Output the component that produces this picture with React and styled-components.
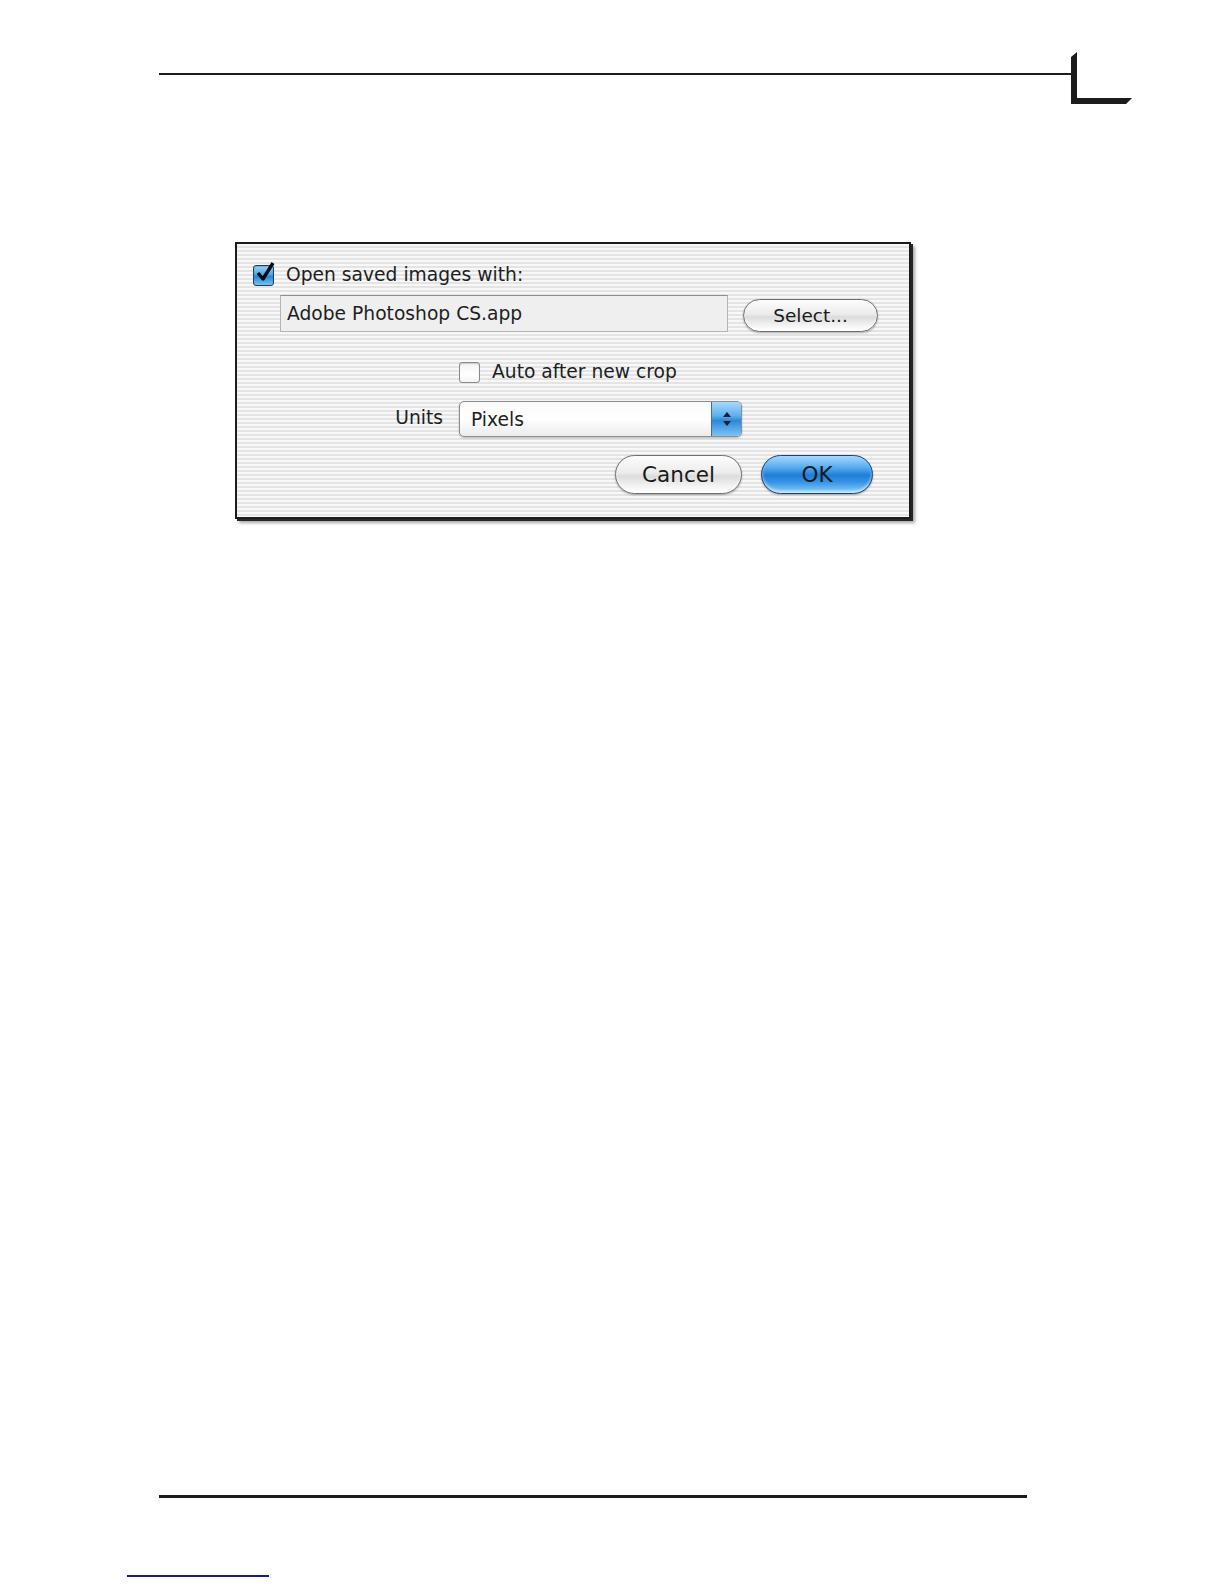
import styled, { createGlobalStyle } from 'styled-components';

const GlobalStyle = createGlobalStyle`
  html, body {
    margin: 0;
    padding: 0;
    background: #ffffff;
    overflow: hidden;
  }
  body {
    font-family: "DejaVu Sans", "Liberation Sans", sans-serif;
    color: #1e1e1e;
  }
`;

export default function App() {
  return (
    <>
      <GlobalStyle />
      <Page>
        <Header>
          <TopRule />
          <Bracket width='62' height='54' viewBox='0 0 62 54'>
            <polygon points='0,53 0,6 6,1 6,47 61,47 55,53' fill='#1c1c1c' />
          </Bracket>
        </Header>

        <Dialog>
          <Row>
            <Checkbox $checked>
              <CheckMark width='22' height='24' viewBox='0 0 22 24'>
                <path d='M4 13 L9 19 L19 3' fill='none' stroke='#0a0a14' strokeWidth='3.4' strokeLinejoin='round' />
              </CheckMark>
            </Checkbox>
            <Label>Open saved images with:</Label>
          </Row>

          <FieldRow>
            <TextField>Adobe Photoshop CS.app</TextField>
            <PillButton $width={135} $height={33} $size={18.5} $shift={4}>Select...</PillButton>
          </FieldRow>

          <FormGrid $top={29}>
            <span />
            <Row>
              <Checkbox />
              <Label>Auto after new crop</Label>
            </Row>
          </FormGrid>

          <FormGrid $top={18}>
            <RightLabel>Units</RightLabel>
            <Popup>
              <PopupText>Pixels</PopupText>
              <PopupArrows>
                <svg width='12' height='20' viewBox='0 0 12 20'>
                  <polygon points='6,3 10,8 2,8' fill='#10203a' />
                  <polygon points='2,12 10,12 6,17' fill='#10203a' />
                </svg>
              </PopupArrows>
            </Popup>
          </FormGrid>

          <ButtonRow>
            <PillButton $width={127} $height={39} $size={21.5}>Cancel</PillButton>
            <PillButton $width={112} $height={39} $size={21.5} $primary>OK</PillButton>
          </ButtonRow>
        </Dialog>

        <BottomRule />
        <LinkRule />
      </Page>
    </>
  );
}

const Page = styled.div`
  width: 1224px;
  height: 1584px;
  overflow: hidden;
`;

const Header = styled.div`
  display: flex;
  align-items: flex-start;
  padding-top: 51px;
  padding-left: 159px;
  height: 54px;
`;

const TopRule = styled.div`
  width: 912px;
  height: 2px;
  margin-top: 22px;
  background: #1c1c1c;
`;

const Bracket = styled.svg`
  display: block;
  flex: none;
`;

const Dialog = styled.div`
  box-sizing: border-box;
  width: 676px;
  margin-top: 137px;
  margin-left: 235px;
  padding: 20px 0 23px 16px;
  border: 2px solid #1c1c1c;
  box-shadow: 2px 2px 0 #262626, 4px 4px 3px rgba(0, 0, 0, 0.35);
  background: repeating-linear-gradient(
    180deg,
    #f8f8f8 0px,
    #f8f8f8 2px,
    #e4e4e4 2px,
    #e4e4e4 4px
  );
  display: flex;
  flex-direction: column;
`;

const Row = styled.div`
  display: flex;
  align-items: center;
  gap: 12px;
  height: 22px;
`;

const Label = styled.span`
  font-size: 18.7px;
  line-height: 22px;
  color: #1e1e1e;
  white-space: nowrap;
`;

const Checkbox = styled.span`
  position: relative;
  box-sizing: border-box;
  width: 21px;
  height: 21px;
  flex: none;
  border-radius: 3px;
  border: 1px solid ${(p) => (p.$checked ? '#1d3f66' : '#8a8a8a')};
  background: ${(p) =>
    p.$checked
      ? 'linear-gradient(180deg, #9fd3f5 0%, #4aa6e4 45%, #2a86d0 55%, #76c1f0 100%)'
      : 'linear-gradient(180deg, #f2f2f2 0%, #ffffff 60%, #f4f4f4 100%)'};
  box-shadow: inset 0 1px 1px rgba(0, 0, 0, 0.18);
`;

const CheckMark = styled.svg`
  position: absolute;
  left: 0;
  top: -6px;
  overflow: visible;
`;

const FieldRow = styled.div`
  display: flex;
  align-items: center;
  gap: 15px;
  margin-top: 9px;
  padding-left: 27px;
  height: 37px;
`;

const TextField = styled.div`
  box-sizing: border-box;
  width: 448px;
  height: 37px;
  padding-left: 6px;
  display: flex;
  align-items: center;
  font-size: 18.7px;
  color: #1e1e1e;
  background: #efefef;
  border: 1px solid #b4b4b4;
  border-top-color: #8e8e8e;
`;

const PillButton = styled.div`
  box-sizing: border-box;
  width: ${(p) => p.$width}px;
  height: ${(p) => p.$height}px;
  flex: none;
  margin-top: ${(p) => p.$shift || 0}px;
  border-radius: ${(p) => p.$height / 2}px;
  display: flex;
  align-items: center;
  justify-content: center;
  font-size: ${(p) => p.$size}px;
  color: #1a1a1a;
  border: 1px solid ${(p) => (p.$primary ? '#1c3f78' : '#6f6f6f')};
  background: ${(p) =>
    p.$primary
      ? 'linear-gradient(180deg, #a9d7fb 0%, #58aef0 30%, #1f7ed8 52%, #3592e4 70%, #8ad0fb 100%)'
      : 'linear-gradient(180deg, #fdfdfd 0%, #ececec 45%, #dcdcdc 55%, #f2f2f2 80%, #ffffff 100%)'};
  box-shadow: 0 1px 2px rgba(0, 0, 0, 0.3),
    inset 0 -2px 3px rgba(255, 255, 255, 0.6);
`;

const FormGrid = styled.div`
  display: grid;
  grid-template-columns: 190px 283px;
  column-gap: 16px;
  align-items: center;
  margin-top: ${(p) => p.$top}px;
`;

const RightLabel = styled.span`
  text-align: right;
  font-size: 18.7px;
  color: #1e1e1e;
  margin-top: -3px;
`;

const Popup = styled.div`
  box-sizing: border-box;
  height: 36px;
  display: flex;
  border: 1px solid #8c8c8c;
  border-radius: 5px;
  overflow: hidden;
  background: linear-gradient(180deg, #fafafa 0%, #ffffff 50%, #ececec 100%);
  box-shadow: 0 1px 2px rgba(0, 0, 0, 0.25);
`;

const PopupText = styled.span`
  flex: 1;
  display: flex;
  align-items: center;
  padding-left: 11px;
  font-size: 18.7px;
  color: #1e1e1e;
`;

const PopupArrows = styled.span`
  width: 29px;
  display: flex;
  align-items: center;
  justify-content: center;
  border-left: 1px solid #3b6fa8;
  background: linear-gradient(180deg, #a8d8fa 0%, #5fb0ee 40%, #2d88d8 55%, #7cc4f4 100%);
`;

const ButtonRow = styled.div`
  display: flex;
  justify-content: flex-end;
  gap: 19px;
  margin-top: 18px;
  padding-right: 36px;
`;

const BottomRule = styled.div`
  width: 868px;
  height: 3px;
  margin-top: 976px;
  margin-left: 159px;
  background: #1c1c1c;
`;

const LinkRule = styled.div`
  width: 142px;
  height: 2px;
  margin-top: 77px;
  margin-left: 127px;
  background: #1a1a8c;
`;
